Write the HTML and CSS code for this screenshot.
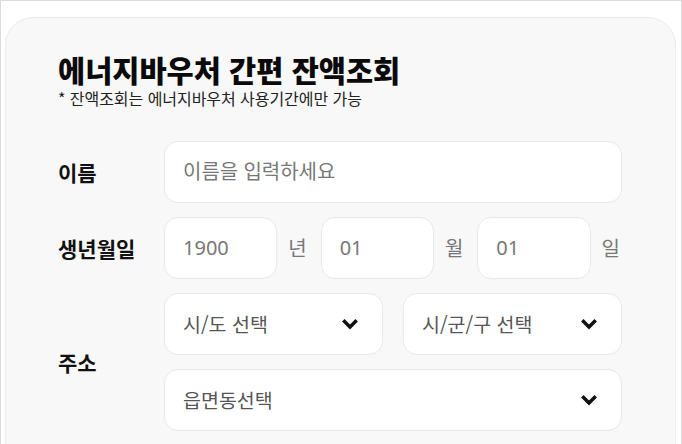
FILE: index.html
```html
<!DOCTYPE html>
<html lang="ko">
<head>
<meta charset="utf-8">
<title>에너지바우처 간편 잔액조회</title>
<link rel="stylesheet" href="styles.css">
</head>
<body>
<div class="frame">
  <div class="card">
    <h1 class="title">에너지바우처 간편 잔액조회</h1>
    <p class="note">* 잔액조회는 에너지바우처 사용기간에만 가능</p>
    <div class="form">
      <div class="label">이름</div>
      <div class="field">
        <input class="input" type="text" placeholder="이름을 입력하세요">
      </div>

      <div class="label">생년월일</div>
      <div class="field birth">
        <input class="input" type="text" placeholder="1900">
        <span class="unit">년</span>
        <input class="input" type="text" placeholder="01">
        <span class="unit">월</span>
        <input class="input" type="text" placeholder="01">
        <span class="unit unit-last">일</span>
      </div>

      <div class="label">주소</div>
      <div class="field addr">
        <div class="select"><span>시/도 선택</span>
          <svg class="chev" width="18" height="12" viewBox="0 0 18 12"><polyline points="2.3,2.3 9,9 15.7,2.3" fill="none" stroke="#111" stroke-width="3.5" stroke-linecap="butt" stroke-linejoin="miter"/></svg>
        </div>
        <div class="select"><span>시/군/구 선택</span>
          <svg class="chev" width="18" height="12" viewBox="0 0 18 12"><polyline points="2.3,2.3 9,9 15.7,2.3" fill="none" stroke="#111" stroke-width="3.5" stroke-linecap="butt" stroke-linejoin="miter"/></svg>
        </div>
        <div class="select select-wide"><span>읍면동선택</span>
          <svg class="chev" width="18" height="12" viewBox="0 0 18 12"><polyline points="2.3,2.3 9,9 15.7,2.3" fill="none" stroke="#111" stroke-width="3.5" stroke-linecap="butt" stroke-linejoin="miter"/></svg>
        </div>
      </div>
    </div>
  </div>
</div>
</body>
</html>
```

FILE: styles.css
```css
* { box-sizing: border-box; }

html, body {
  margin: 0;
  padding: 0;
  background: #ffffff;
  font-family: "Noto Sans", "Noto Sans CJK KR", sans-serif;
  color: #111;
}

.frame {
  border: 1px solid #dcdcdc;
  min-height: 620px;
  padding: 16px 5px 0 4px;
  background: #fff;
}

.card {
  background: #f8f8f8;
  border: 1px solid #ebebeb;
  border-radius: 28px;
  padding: 34px 53px 40px 52px;
}

.title {
  margin: 0;
  font-family: "Noto Sans CJK KR", sans-serif;
  font-size: 29.5px;
  font-weight: 900;
  line-height: 1.2;
  letter-spacing: 0;
  color: #0a0a0a;
}

.note {
  margin: 2px 0 0;
  font-family: "Noto Sans CJK KR", sans-serif;
  font-size: 16px;
  line-height: 1.2;
  letter-spacing: -0.05px;
  color: #222;
}

.form {
  margin-top: 32px;
  display: grid;
  grid-template-columns: 106px 1fr;
  row-gap: 14px;
  align-items: center;
}

.label {
  font-family: "Noto Sans CJK KR", sans-serif;
  font-size: 21px;
  font-weight: 700;
  letter-spacing: 0;
  color: #111;
}

.field {
  min-width: 0;
}

.input {
  display: block;
  width: 100%;
  height: 62px;
  margin: 0;
  padding: 0 18px;
  background: #fff;
  border: 1px solid #e8e8e8;
  border-radius: 14px;
  font-family: "Noto Sans", "Noto Sans CJK KR", sans-serif;
  font-size: 20px;
  color: #333;
  outline: none;
}

.input::placeholder {
  color: #777;
  opacity: 1;
}

.birth {
  display: flex;
  align-items: center;
}

.birth .input {
  flex: 1 1 0;
  min-width: 0;
}

.unit {
  flex: none;
  margin: 0 14px 0 11px;
  font-family: "Noto Sans CJK KR", sans-serif;
  font-size: 20px;
  color: #777;
}

.unit-last {
  margin-right: 2px;
}

.addr {
  display: grid;
  grid-template-columns: 1fr 1fr;
  column-gap: 20px;
  row-gap: 14px;
}

.select {
  height: 62px;
  display: flex;
  align-items: center;
  justify-content: space-between;
  padding: 0 23px 0 18px;
  background: #fff;
  border: 1px solid #e8e8e8;
  border-radius: 14px;
  font-family: "Noto Sans CJK KR", sans-serif;
  font-size: 19.5px;
  color: #555;
}

.select-wide {
  grid-column: 1 / 3;
}

.chev {
  flex: none;
  display: block;
}
```
